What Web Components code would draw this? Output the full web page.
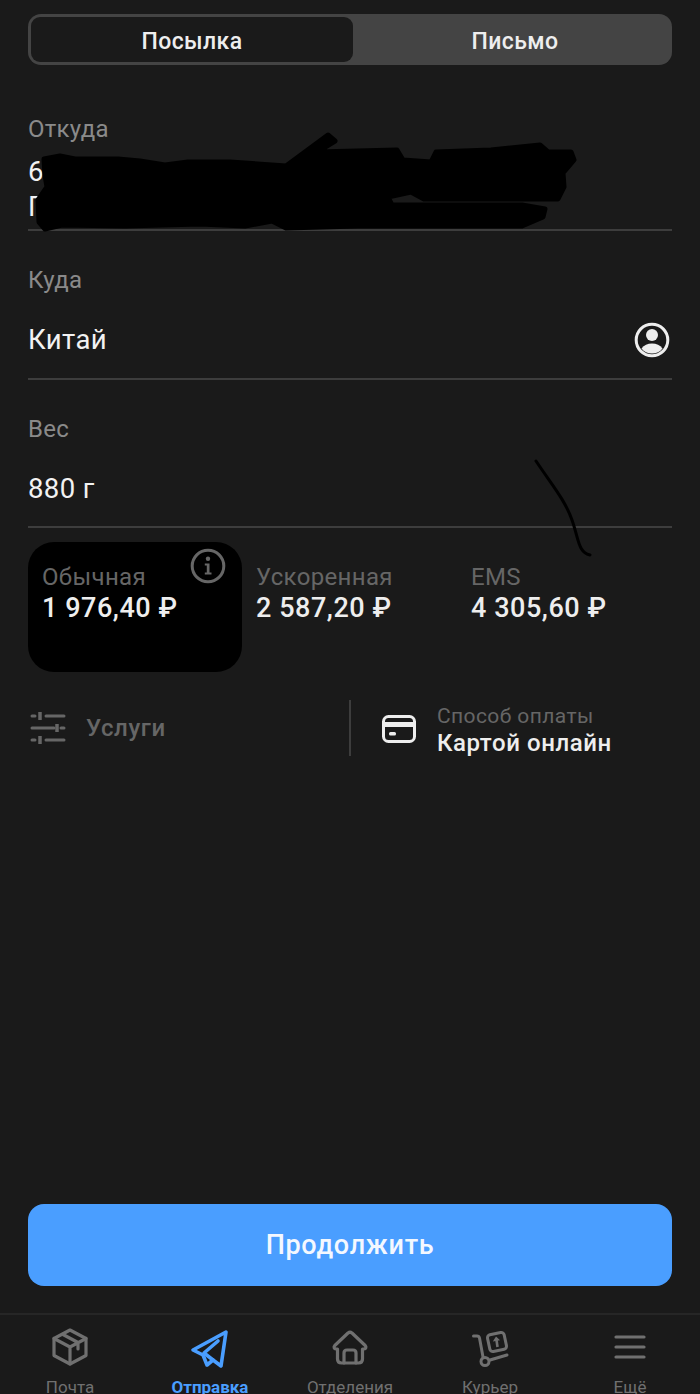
<!DOCTYPE html>
<html lang="ru"><head><meta charset="utf-8"><title>Отправка</title>
<style>
html,body{margin:0;padding:0;background:#1a1a1a}
body{font-family:Roboto,"Noto Sans",sans-serif;color:#eee}
</style></head><body>
<send-screen></send-screen>
<script>
function el(name, css, html){
  customElements.define(name, class extends HTMLElement{
    constructor(){super();const r=this.attachShadow({mode:'open'});r.innerHTML='<style>'+css+'</style>'+html;}
  });
}
el('seg-switch',`
:host{display:flex;height:51px;box-sizing:border-box;padding:3px;background:#444;border-radius:13px;font:500 23px/1 Roboto,sans-serif;letter-spacing:.4px;color:#eee}
div{display:flex;align-items:center;justify-content:center;padding-top:3px;box-sizing:border-box}
.a{width:322px;background:#1a1a1a;border-radius:9px}
.b{flex:1;padding-left:8px}
`,`<div class="a">Посылка</div><div class="b">Письмо</div>`);
el('form-field',`
:host{display:block;height:149px;box-sizing:border-box;border-bottom:2px solid #3d3d3d;position:relative}
.l{font:400 24px/26px Roboto,sans-serif;color:#8a8a8a;padding-top:var(--lt,36px);letter-spacing:.25px}
.v{font:400 27.500px/35px Roboto,sans-serif;color:#f2f2f2;display:flex;justify-content:space-between;align-items:center;padding-top:var(--vt,28px);letter-spacing:.4px}
`,`<div class="l"><slot name="label"></slot></div><div class="v"><slot></slot></div>`);
el('tariff-card',`
:host{display:block;flex:none;box-sizing:border-box;width:214.500px;height:130px;padding:22px 14px;border-radius:26px;position:relative}
:host([on]){background:#000}
.l{font:400 24px/26px Roboto,sans-serif;color:#666;letter-spacing:.35px}
.p{font:500 27px/32px Roboto,sans-serif;color:#eee;letter-spacing:.55px;margin-top:2px}
`,`<div class="l"><slot name="label"></slot></div><div class="p"><slot></slot></div><slot name="badge"></slot>`);
el('nav-item',`
:host{display:flex;flex-direction:column;align-items:center;flex:1;color:#707070;font:400 17px/20px Roboto,sans-serif;white-space:nowrap}
:host([on]){color:#4a9eff;font-weight:700}
.i{height:40px;flex:none;display:flex;align-items:center;justify-content:center;margin-bottom:10px}
`,`<div class="i"><slot name="icon"></slot></div><slot></slot>`);
el('bottom-nav',`
:host{display:flex;height:81px;flex:none;box-sizing:border-box;border-top:2px solid #262626;padding:12px 0 0;overflow:hidden;background:#1a1a1a}
`,`<slot></slot>`);
el('send-screen',`
:host{display:flex;flex-direction:column;width:700px;height:1394px;box-sizing:border-box;overflow:hidden;background:#1a1a1a;position:relative}
.top{padding:14px 28px 0}
.fields{margin-top:13px}
.tar{display:flex;margin-top:14px}
.extra{display:flex;height:56px;margin-top:28px;align-items:center}
.svc{width:323px;box-sizing:border-box;display:flex;align-items:center;gap:20px;font:500 24px/26px Roboto,sans-serif;color:#666;letter-spacing:.6px;padding-left:2px;height:56px;border-right:2px solid #3d3d3d}
.pay{display:flex;align-items:center;gap:20px;padding-left:30px}
.pt{padding-top:6px}
.pl{font:400 21px/24px Roboto,sans-serif;color:#666;letter-spacing:.4px}
.pv{font:500 24px/30px Roboto,sans-serif;color:#eee;letter-spacing:.58px}
.sp{flex:1}
.btn{margin:0 28px 27px;height:82px;flex:none;border-radius:16px;background:#4a9eff;color:#f4f8ff;display:flex;align-items:center;justify-content:center;font:500 27px/1 Roboto,sans-serif;letter-spacing:.7px;border:0;padding:0}
.ink{position:absolute;left:0;top:0;pointer-events:none}
svg{display:block;overflow:visible}
`,`
<div class="top">
<seg-switch></seg-switch>
<div class="fields">
<form-field style="--lt:38px;height:153px;--vt:12px"><span slot="label">Откуда</span><span>6<br>Г</span></form-field>
<form-field><span slot="label">Куда</span><span>Китай</span>
<svg width="36" height="36" viewBox="0 0 36 36" style="margin-right:2px;margin-top:1px"><circle cx="18" cy="18" r="15.800" fill="none" stroke="#eee" stroke-width="3"/><circle cx="18" cy="13" r="6" fill="#eee"/><path d="M7.500 26.500C10 23 13.500 21.500 18 21.500s8 1.500 10.500 5C26 29.800 22.500 31.500 18 31.500S10 29.800 7.500 26.500Z" fill="#eee"/></svg>
</form-field>
<form-field style="height:148px;--vt:29px"><span slot="label">Вес</span><span>880 г</span></form-field>
</div>
<div class="tar">
<tariff-card on style="width:214px"><span slot="label">Обычная</span>1 976,40 ₽
<svg slot="badge" viewBox="0 0 36 36" style="position:absolute;right:16px;top:6px;width:36px;height:36px"><circle cx="18" cy="18" r="15.800" fill="none" stroke="#666" stroke-width="3"/><circle cx="18" cy="10.800" r="2.200" fill="#666"/><path d="M14.800 15.500H19.500V24.500H21.500V26.500H14.800V24.500H16.800V17.500H14.800Z" fill="#666"/></svg>
</tariff-card>
<tariff-card style="width:215px"><span slot="label">Ускоренная</span>2 587,20 ₽</tariff-card>
<tariff-card><span slot="label">EMS</span>4 305,60 ₽</tariff-card>
</div>
<div class="extra">
<div class="svc">
<svg width="36" height="36" viewBox="0 0 36 36" fill="none" stroke="#666" stroke-width="3" stroke-linecap="round"><path d="M2 6H5M16 6H34M2 18H24M31 18H34M2 30H5M16 30H34"/><path d="M10 2V10M10 26V34M27 14V22" stroke-width="3.500" stroke-linecap="butt"/></svg>
<span>Услуги</span></div>
<div class="pay">
<svg width="36" height="30" viewBox="0 0 36 30" fill="none" style="margin-top:2px"><rect x="2.500" y="2.500" width="31" height="25" rx="5" stroke="#eee" stroke-width="3"/><path d="M2 10.500H34" stroke="#eee" stroke-width="5"/><rect x="8" y="18" width="7" height="3.500" rx="1.500" fill="#eee"/></svg>
<div class="pt"><div class="pl">Способ оплаты</div><div class="pv">Картой онлайн</div></div>
</div>
</div>
</div>
<div class="sp"></div>
<button class="btn">Продолжить</button>
<bottom-nav>
<nav-item><svg slot="icon" width="36" height="38" viewBox="0 0 36 38" fill="none" stroke="#707070" stroke-width="3.200" stroke-linejoin="round" stroke-linecap="round"><path d="M18 2 34 10.500V27.500L18 36 2 27.500V10.500Z"/><path d="M2 10.500 18 19 34 10.500M18 19V36M11 6.500 26 14.500V21"/></svg>Почта</nav-item>
<nav-item on><svg slot="icon" width="38" height="38" viewBox="0 0 38 38" fill="none" stroke="#4a9eff" stroke-width="3.600" stroke-linejoin="round" stroke-linecap="round" style="margin-top:3px"><path d="M35 2 2 20 12 25 16 35 22 30 30 36Z"/><path d="M27 11 13 23 22 30"/></svg>Отправка</nav-item>
<nav-item><svg slot="icon" width="38" height="36" viewBox="0 0 38 36" fill="none" stroke="#707070" stroke-width="3.200" stroke-linejoin="round" stroke-linecap="round"><path d="M6.500 20H5C3 20 2.500 18 3.800 16.500L17 4Q19 2.500 21 4L34.200 16.500C35.500 18 35 20 33 20H31.500V30Q31.500 34 27.500 34H10.500Q6.500 34 6.500 30Z"/><path d="M13 34V24Q13 21 16 21H22Q25 21 25 24V34"/></svg>Отделения</nav-item>
<nav-item><svg slot="icon" width="38" height="40" viewBox="0 0 38 40" fill="none" stroke="#707070" stroke-width="3" stroke-linejoin="round" stroke-linecap="round"><path d="M2.500 9H6Q8 9 8.500 11L12 30M19 33 36 28"/><circle cx="14" cy="34.500" r="4"/><rect x="17.500" y="6.500" width="17" height="17" rx="3" transform="rotate(-12 26 15)"/><path d="M26.500 20 25.500 13" stroke-width="2.600" stroke-linecap="butt"/><path d="M25 9.500 21.800 14.500 29 13.300Z" fill="#707070" stroke="none"/></svg>Курьер</nav-item>
<nav-item><svg slot="icon" width="32" height="26" viewBox="0 0 32 26" stroke="#707070" stroke-width="3.200" stroke-linecap="round"><path d="M2 3H30M2 13H30M2 23H30"/></svg>Ещё</nav-item>
</bottom-nav>
<svg class="ink" width="700" height="600" viewBox="0 0 700 600" fill="none" stroke="#000" stroke-linecap="round" stroke-linejoin="round">
<path fill="#000" stroke-width="5" d="M44 159 60 156 75 159 118 159 140 161 165 165 188 162 230 162 286 166 328 135 335 141 317 152 397 150 403 160 431 162 436 152 491 150 540 145 548 152 571 152 574 160 563 173 564 187 558 199 424 199 411 192 388 197 392 205 522 205 545 209 543 217 522 226 357 226 286 228 272 221 245 226 200 224 125 226 62 225 45 229 39 222 38 200 47 187 45 175Z"/>
<path d="M536 461C552 485 565 500 572 520S578 552 590 555" stroke-width="3"/>
</svg>
`);
</script>
</body></html>
